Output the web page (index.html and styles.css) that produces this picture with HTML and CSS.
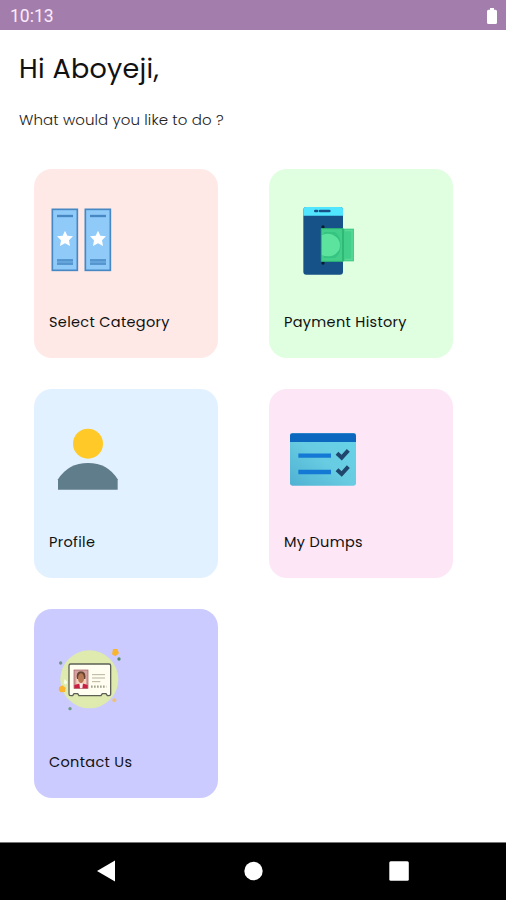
FILE: index.html
```html
<!DOCTYPE html>
<html lang="en">
<head>
<meta charset="utf-8">
<title>Home</title>
<link rel="stylesheet" href="styles.css">
</head>
<body>
<header class="status">
  <span class="clock">10:13</span>
  <svg class="battery" viewBox="0 0 12 18"><path d="M4 1h4v1.700h1.500q1.500 0 1.500 1.500v11.300q0 1.500-1.500 1.500h-7q-1.500 0-1.500-1.500V4.200q0-1.500 1.500-1.500H4z" fill="#fff"/></svg>
</header>
<main class="content">
  <h1 class="greeting">Hi Aboyeji,</h1>
  <p class="prompt">What would you like to do ?</p>
  <section class="grid">
    <a class="card category">
      <svg class="icon" viewBox="0 0 300 270">
        <g id="ticket"><rect x="37" y="43" width="75" height="183" fill="#90caf9" stroke="#4788c2" stroke-width="5"/>
        <path d="M51 63h48" stroke="#4788c2" stroke-width="7"/>
        <rect x="51" y="193" width="48" height="16" fill="#66a5db"/><path d="M51 195h48M51 207h48" stroke="#4f90ca" stroke-width="4"/>
        <path d="M75 107l7 15 17 2-12 12 3 17-15-8-15 8 3-17-12-12 17-2z" fill="#fff"/></g>
        <use href="#ticket" x="99"/>
      </svg>
      <span class="label">Select Category</span>
    </a>
    <a class="card payment">
      <svg class="icon" viewBox="-45 0 300 270">
        <rect x="40" y="36" width="119" height="203" rx="9" fill="#165287"/>
        <path d="M40 62V44q0-8 8-8h103q8 0 8 8v18z" fill="#50e6ff"/>
        <path d="M76 48h5M90 48h28" stroke="#165287" stroke-width="8" stroke-linecap="round"/>
        <circle cx="99" cy="96" r="5" fill="#071d2d"/><circle cx="99" cy="204" r="5" fill="#071d2d"/>
        <rect x="94" y="101" width="98" height="98" fill="#42cf8a"/>
        <path d="M94 119q8 0 8-8h33q17 11 17 39t-17 39h-33q0-8-8-8z" fill="#35c481"/>
        <path d="M94 121q16-9 34-2 22 10 22 32t-23 31q-17 5-33-2z" fill="#5ce49e"/>
        <path d="M159 101v98" stroke="#24a568" stroke-width="3"/>
        <path d="M165 107h21v86h-21" fill="none" stroke="#5bd996" stroke-width="4"/>
        <path d="M94 101h65v98H94z" fill="none" stroke="#2eb774" stroke-width="3"/>
      </svg>
      <span class="label">Payment History</span>
    </a>
    <a class="card profile">
      <svg class="icon" viewBox="-15 -15 300 270">
        <circle cx="129" cy="71" r="45" fill="#ffca28"/>
        <path d="M39 209v-31q31-49 90-49t89 49v31z" fill="#607d8b"/>
      </svg>
      <span class="label">Profile</span>
    </a>
    <a class="card dumps">
      <svg class="icon" viewBox="-15 -15 300 270">
        <defs><linearGradient id="sheet" x1="1" y1="0" x2="0" y2="1"><stop stop-color="#66d3e8"/><stop offset=".5" stop-color="#68cce2"/><stop offset="1" stop-color="#4fb1d2"/></linearGradient></defs>
        <rect x="30" y="40" width="198" height="157" rx="7" fill="url(#sheet)"/>
        <path d="M30 66V47q0-7 7-7h184q7 0 7 7v19z" fill="#0b68be"/>
        <path d="M55 107h98M55 156h98" stroke="#1479d4" stroke-width="13"/>
        <path d="M171 100l14 13 20-22M171 149l14 13 20-22" fill="none" stroke="#20466d" stroke-width="12"/>
      </svg>
      <span class="label">My Dumps</span>
    </a>
    <a class="card contact">
      <svg class="icon" viewBox="-15 0 300 270">
        <circle cx="133" cy="133" r="87" fill="#deeaae"/>
        <path d="M204 42l13 0 5 13-11 9-10-6zM43 156l9-5 10 7-2 13-13 1-6-7z" fill="#f9b52f"/>
        <circle cx="208" cy="196" r="6" fill="#eec07d"/>
        <circle cx="222" cy="72" r="5" fill="#528a67"/><circle cx="47" cy="84" r="5" fill="#71958b"/><circle cx="75" cy="221" r="5" fill="#709b83"/>
        <path d="M59 132l8 8-4 9-7-4z" fill="#f7ffe5"/>
        <path d="M77 87h115q5 0 5 5v86q0 4-5 4h-5l-4-6h-11l-4 6h-66l-4-6H87l-4 6h-6q-5 0-5-5V92q0-5 5-5z" fill="#fffef0" stroke="#5c6054" stroke-width="4"/>
        <rect x="87" y="105" width="42" height="55" fill="#d6a2a0" stroke="#9b5c5c" stroke-width="2"/>
        <path d="M94 149q-3-38 14-40 18 2 15 40z" fill="#f4d2bd"/>
        <path d="M96 132q-4-23 12-23t13 23z" fill="#674332"/>
        <ellipse cx="108" cy="130" rx="9" ry="15" fill="#b97955"/>
        <path d="M88 160v-10l14-4h14l12 4v10z" fill="#c92042"/><path d="M103 145h11l-2 15h-7z" fill="#fff0ee"/>
        <path d="M141 119h39M141 129h39M141 140h25" stroke="#aaa18c" stroke-width="2.500"/>
        <path d="M138 155h46" stroke="#a3a38f" stroke-width="7" stroke-dasharray="5 4"/>
      </svg>
      <span class="label">Contact Us</span>
    </a>
  </section>
</main>
<nav class="navbar">
  <svg viewBox="0 0 24 24"><path d="M3 12L21 1.500v21z"/></svg>
  <svg viewBox="0 0 24 24"><circle cx="12.500" cy="12" r="9.200"/></svg>
  <svg viewBox="0 0 24 24"><rect x="2.300" y="2.300" width="19.500" height="19.500" rx="1.500"/></svg>
</nav>
</body>
</html>
```
FILE: styles.css
```css
* { box-sizing: border-box; }
body {
  margin: 0;
  height: 900px;
  display: flex;
  flex-direction: column;
  background: #fff;
  color: #111;
  font-family: Poppins, Inter, sans-serif;
}
.status {
  height: 30px;
  padding: 2px 8px 0 10px;
  display: flex;
  align-items: center;
  justify-content: space-between;
  background: #a37eac;
  color: #fbeaff;
}
.clock { font: 400 17.5px/28px Roboto, sans-serif; }
.battery { width: 12px; height: 18px; }
.content { flex: 1; }
.greeting {
  margin: 20px 0 0 19px;
  font-size: 27px;
  line-height: 38px;
  font-weight: 400;
  letter-spacing: 0.3px;
}
.prompt {
  margin: 21px 0 0 19px;
  font-size: 15px;
  line-height: 22px;
  font-weight: 300;
  letter-spacing: 0.1px;
  color: #222;
}
.grid {
  margin: 38px 0 0 34px;
  display: grid;
  grid-template-columns: 184px 184px;
  grid-auto-rows: 189px;
  gap: 31px 51px;
}
.card {
  border-radius: 18px;
  padding: 26px 6px 0;
  display: flex;
  flex-direction: column;
}
.icon { width: 100px; height: 90px; }
.label {
  margin: 26px 0 0 9px;
  font-size: 14.5px;
  line-height: 22px;
  letter-spacing: 0.32px;
  white-space: nowrap;
}
.category { background: #fee9e7; }
.payment { background: #e0fee0; }
.profile { background: #e2f1ff; }
.dumps { background: #fde6f6; }
.contact { background: #cbcbff; }
.navbar {
  height: 58px;
  border-top: 1px solid #777;
  background: #000;
  display: flex;
  justify-content: space-between;
  align-items: center;
  padding: 0 95px 2px 94px;
}
.navbar svg { width: 24px; height: 24px; fill: #fff; }
```
